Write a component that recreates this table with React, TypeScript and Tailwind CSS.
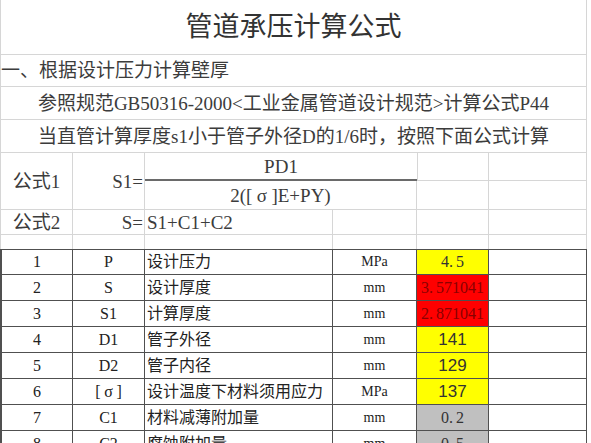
import React from "react";

const FONT = { fontFamily: '"Liberation Serif", "Noto Sans CJK SC", serif' };

const L = "border-[#d6d6d6]";
const D = "border-[#505050]";

function Sigma() {
  return <span className="inline-block w-[1em] text-center">σ</span>;
}

function Num({ v }: { v: string }) {
  return (
    <span>
      {v.split("").map((c, i) =>
        c === "." ? (
          <span key={i} className="inline-block w-[0.45em] text-left">.</span>
        ) : (
          <span key={i}>{c}</span>
        )
      )}
    </span>
  );
}

type Row = {
  n: string;
  sym: React.ReactNode;
  name: string;
  unit: string;
  val: string;
  kind: "y" | "r" | "g";
  sans?: boolean;
};

const rows: Row[] = [
  { n: "1", sym: "P", name: "设计压力", unit: "MPa", val: "4.5", kind: "y" },
  { n: "2", sym: "S", name: "设计厚度", unit: "mm", val: "3.571041", kind: "r" },
  { n: "3", sym: "S1", name: "计算厚度", unit: "mm", val: "2.871041", kind: "r" },
  { n: "4", sym: "D1", name: "管子外径", unit: "mm", val: "141", kind: "y", sans: true },
  { n: "5", sym: "D2", name: "管子内径", unit: "mm", val: "129", kind: "y", sans: true },
  {
    n: "6",
    sym: (
      <span>
        [<Sigma />]
      </span>
    ),
    name: "设计温度下材料须用应力",
    unit: "MPa",
    val: "137",
    kind: "y",
    sans: true,
  },
  { n: "7", sym: "C1", name: "材料减薄附加量", unit: "mm", val: "0.2", kind: "g" },
  { n: "8", sym: "C2", name: "腐蚀附加量", unit: "mm", val: "0.5", kind: "g" },
];

export default function App() {
  return (
    <div className="w-[591px] h-[443px] overflow-hidden bg-white" style={FONT}>
      <div className="grid grid-cols-[73px_72px_188px_84px_72px_98px] w-[587px] text-[#3c3c3c]">
        <div className={`col-span-6 h-[55px] border-l border-r border-b ${L} flex items-center justify-center text-[27px] leading-none text-[#333]`}>
          管道承压计算公式
        </div>
        <div className={`col-span-6 h-[32px] border-l border-r border-b ${L} flex items-center text-[19px] leading-none`}>
          一、根据设计压力计算壁厚
        </div>
        <div className={`col-span-6 h-[33px] border-l border-r border-b ${L} flex items-center justify-center text-[19px] leading-none`}>
          参照规范GB50316-2000&lt;工业金属管道设计规范&gt;计算公式P44
        </div>
        <div className={`col-span-6 h-[33px] border-l border-r border-b ${L} flex items-center justify-center text-[19px] leading-none`}>
          当直管计算厚度s1小于管子外径D的1/6时，按照下面公式计算
        </div>

        <div className={`row-span-2 border-l border-r border-b ${L} flex items-center justify-center text-[19px] leading-none`}>
          公式1
        </div>
        <div className={`row-span-2 border-r border-b ${L} flex items-center justify-end pr-[1px] text-[19px] leading-none`}>
          S1=
        </div>
        <div className="col-span-2 h-[28px] border-b-2 border-[#6a6a6a] flex items-center justify-center text-[19px] leading-none">
          PD1
        </div>
        <div className={`h-[28px] border-l border-r border-b ${L}`} />
        <div className={`h-[28px] border-r border-b ${L}`} />
        <div className={`col-span-2 h-[29px] border-r border-b ${L} flex items-center justify-center text-[19px] leading-none`}>
          2([<Sigma />]E+PY)
        </div>
        <div className={`h-[29px] border-r border-b ${L}`} />
        <div className={`h-[29px] border-r border-b ${L}`} />

        <div className={`h-[25px] border-l border-r border-b ${L} flex items-center justify-center text-[19px] leading-none`}>
          公式2
        </div>
        <div className={`h-[25px] border-r border-b ${L} flex items-center justify-end pr-[1px] text-[19px] leading-none`}>
          S=
        </div>
        <div className={`h-[25px] border-r border-b ${L} flex items-center pl-[2px] text-[19px] leading-none`}>
          S1+C1+C2
        </div>
        <div className={`h-[25px] border-r border-b ${L}`} />
        <div className={`h-[25px] border-r border-b ${L}`} />
        <div className={`h-[25px] border-r border-b ${L}`} />

        <div className={`h-[14px] border-l border-r ${L}`} />
        <div className={`h-[14px] border-r ${L}`} />
        <div className={`h-[14px] border-r ${L}`} />
        <div className={`h-[14px] border-r ${L}`} />
        <div className={`h-[14px] border-r ${L}`} />
        <div className={`h-[14px] border-r ${L}`} />

        {rows.map((r, i) => {
          const bg =
            r.kind === "y" ? "bg-[#ffff00]" : r.kind === "r" ? "bg-[#ff0000]" : "bg-[#c0c0c0]";
          const tc = r.kind === "r" ? "text-[#8a0000]" : "text-[#333]";
          const top = i === 0 ? "border-t" : "";
          return (
            <React.Fragment key={r.n}>
              <div className={`h-[26px] border-l-2 border-r border-b ${top} ${D} flex items-center justify-center text-[16px] leading-none text-[#222]`}>
                {r.n}
              </div>
              <div className={`h-[26px] border-r border-b ${top} ${D} flex items-center justify-center text-[16px] leading-none text-[#222]`}>
                {r.sym}
              </div>
              <div className={`h-[26px] border-r border-b ${top} ${D} flex items-center pl-[2px] text-[16px] leading-none text-[#222] whitespace-nowrap`}>
                {r.name}
              </div>
              <div className={`h-[26px] border-r border-b ${top} ${D} flex items-center justify-center text-[14px] leading-none text-[#222]`}>
                {r.unit}
              </div>
              <div
                className={`h-[26px] border-r border-b ${top} ${D} ${bg} ${tc} flex items-center justify-center leading-none ${r.sans ? "text-[17px]" : "text-[16px]"} whitespace-nowrap`}
                style={r.sans ? { fontFamily: '"Liberation Sans", sans-serif' } : undefined}
              >
                {r.sans ? r.val : <Num v={r.val} />}
              </div>
              <div className={`h-[26px] border-r border-b ${top} ${D}`} />
            </React.Fragment>
          );
        })}
      </div>
    </div>
  );
}
